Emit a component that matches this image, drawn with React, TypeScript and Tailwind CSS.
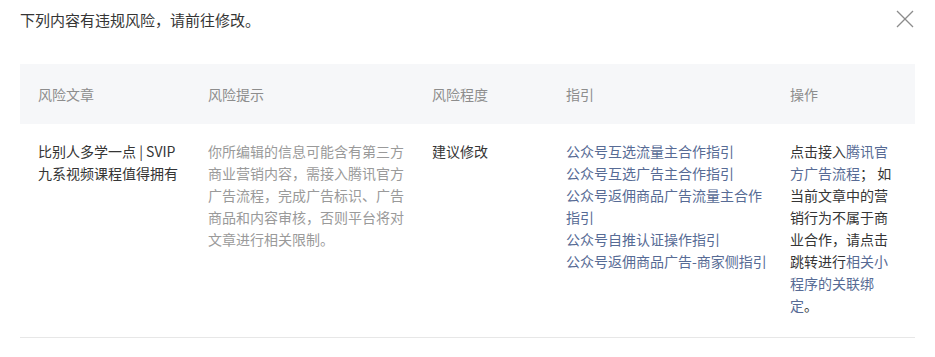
import React from 'react';

const guides = [
  '公众号互选流量主合作指引',
  '公众号互选广告主合作指引',
  '公众号返佣商品广告流量主合作指引',
  '公众号自推认证操作指引',
  '公众号返佣商品广告-商家侧指引',
];

export default function App() {
  return (
    <div className="w-[935px] h-[357px] bg-white font-['Noto_Sans_CJK_SC',sans-serif] overflow-hidden">
      {/* Dialog header */}
      <div className="flex items-start justify-between pl-[20px] pr-[21px] pt-[10px]">
        <h2 className="text-[15px] leading-[20px] text-[#353535] font-normal">下列内容有违规风险，请前往修改。</h2>
        <button className="w-[18px] h-[18px]" aria-label="关闭">
          <svg width="18" height="18" viewBox="0 0 18 18" fill="none" stroke="#8c8c8c" strokeWidth="1.3">
            <line x1="1" y1="1" x2="17" y2="17" />
            <line x1="17" y1="1" x2="1" y2="17" />
          </svg>
        </button>
      </div>

      {/* Risk table */}
      <div className="mx-[20px] mt-[34px]">
        <table className="w-full table-fixed border-collapse text-[14px]">
          <colgroup>
            <col className="w-[170px]" />
            <col className="w-[224px]" />
            <col className="w-[134px]" />
            <col className="w-[224px]" />
            <col />
          </colgroup>
          <thead>
            <tr className="bg-[#f6f7f9] h-[60px] text-left text-[#8d8d8d]">
              <th className="font-normal pl-[18px]">风险文章</th>
              <th className="font-normal pl-[18px]">风险提示</th>
              <th className="font-normal pl-[18px]">风险程度</th>
              <th className="font-normal pl-[18px]">指引</th>
              <th className="font-normal pl-[18px]">操作</th>
            </tr>
          </thead>
          <tbody>
            <tr className="border-b border-[#e7e7e7] align-top leading-[22px]">
              <td className="pl-[18px] pr-[10px] pt-[16px] pb-[21px] text-[#353535]">比别人多学一点 | SVIP九系视频课程值得拥有</td>
              <td className="pl-[18px] pr-[8px] pt-[16px] pb-[21px] text-[#9a9a9a]">
                你所编辑的信息可能含有第三方商业营销内容，需接入腾讯官方广告流程，完成广告标识、广告商品和内容审核，否则平台将对文章进行相关限制。
              </td>
              <td className="pl-[18px] pt-[16px] pb-[21px] text-[#353535]">建议修改</td>
              <td className="pl-[18px] pr-[2px] pt-[16px] pb-[21px]">
                <div className="flex flex-col">
                  {guides.map((g) => (
                    <a key={g} className="text-[#576b95] cursor-pointer">{g}</a>
                  ))}
                </div>
              </td>
              <td className="pl-[18px] pr-[20px] pt-[16px] pb-[21px] text-[#353535]">
                点击接入<a className="text-[#576b95]">腾讯官方广告流程</a>；&nbsp;如当前文章中的营销行为不属于商业合作，请点击跳转进行<a className="text-[#576b95]">相关小程序的关联绑定</a>。
              </td>
            </tr>
          </tbody>
        </table>
      </div>
    </div>
  );
}
